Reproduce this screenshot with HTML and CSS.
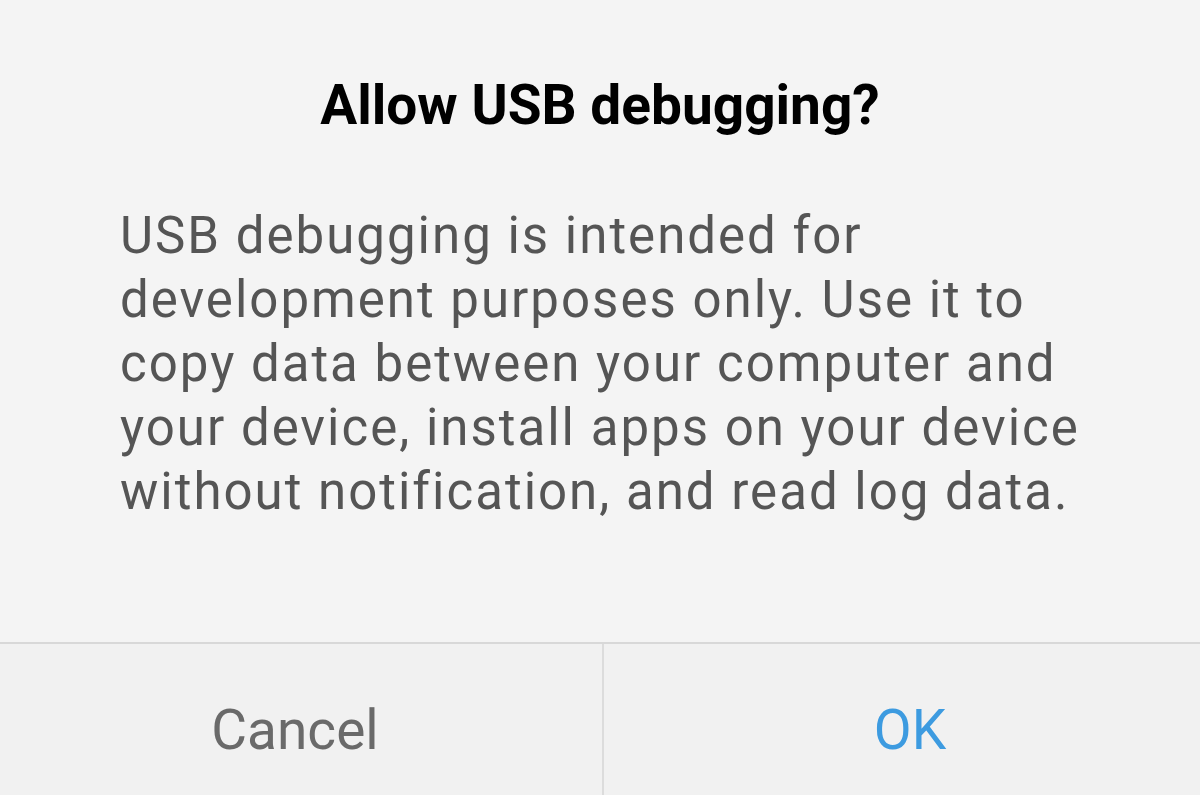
FILE: index.html
```html
<!DOCTYPE html>
<html>
<head>
<meta charset="utf-8">
<link rel="stylesheet" href="styles.css">
</head>
<body>
<div class="dialog">
  <div class="content">
    <h1 class="title">Allow USB debugging?</h1>
    <p class="message">USB debugging is intended for development purposes only. Use it to copy data between your computer and your device, install apps on your device without notification, and read log data.</p>
  </div>
  <div class="actions">
    <div class="btn cancel">Cancel</div>
    <div class="btn ok">OK</div>
  </div>
</div>
</body>
</html>
```
FILE: styles.css
```css
html, body {
  margin: 0;
  padding: 0;
  height: 100%;
  overflow: hidden;
  background: #f4f4f4;
}
.dialog {
  display: flex;
  flex-direction: column;
  height: 795px;
  font-family: Roboto, "Noto Sans", sans-serif;
}
.content {
  height: 642px;
  box-sizing: border-box;
  padding: 0 90px 0 120px;
}
.title {
  margin: 0;
  padding-top: 73px;
  font-size: 55px;
  font-weight: 700;
  color: #000;
  text-align: center;
  line-height: 64px;
  padding-right: 30px;
}
.message {
  margin: 67px 0 0 0;
  font-size: 51px;
  letter-spacing: 2px;
  line-height: 64px;
  color: #555;
}
.actions {
  display: flex;
  flex: 1;
  border-top: 2px solid #d8d8d8;
  background: #f1f1f1;
}
.btn {
  flex: 1;
  display: flex;
  align-items: center;
  justify-content: center;
  font-size: 55px;
  padding-top: 20px;
  box-sizing: border-box;
}
.cancel {
  color: #6a6a6a;
  border-right: 2px solid #dcdcdc;
  flex: 0 0 604px;
  padding-right: 12px;
}
.ok {
  color: #3d9be0;
  padding-left: 16px;
}
```
